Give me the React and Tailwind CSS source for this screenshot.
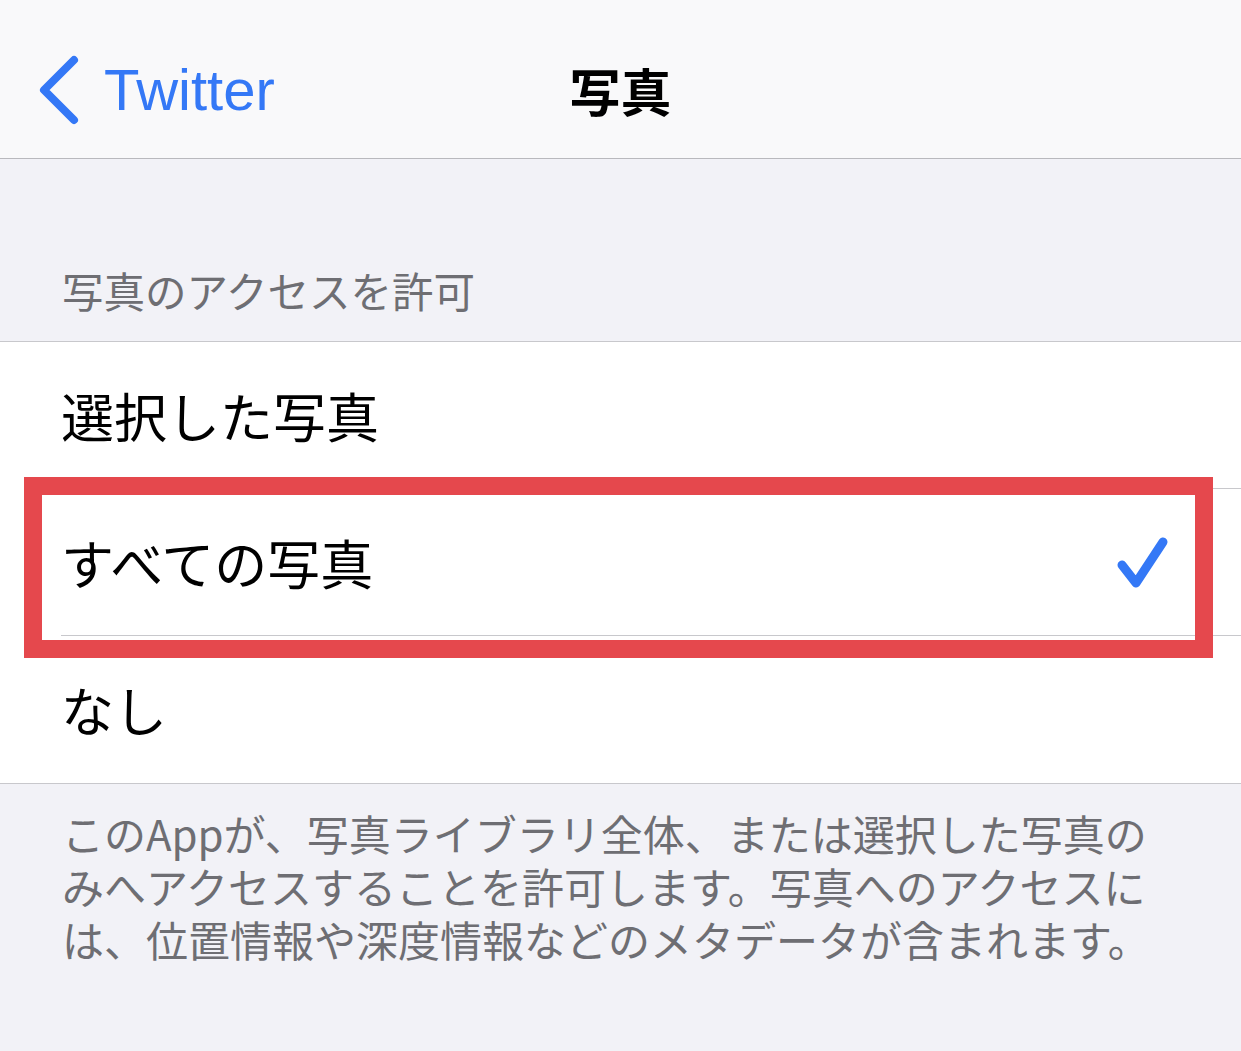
import React from 'react';

const jp = { fontFamily: '"Noto Sans CJK JP", "Noto Sans", sans-serif' };

function Row({ label, checked, last }) {
  return (
    <div className="h-[147px] pl-[61px] bg-white">
      <div className={`h-full flex items-center justify-between pr-[69px] ${last ? '' : 'border-b border-[#c8c8cc]'}`}>
        <span className="text-[53px] leading-none text-black" style={jp}>{label}</span>
        {checked && (
          <svg width="60" height="60" viewBox="0 0 60 60" fill="none">
            <path d="M10 33 L24 51 L51 10" stroke="#3478f6" strokeWidth="9" strokeLinecap="round" strokeLinejoin="round" />
          </svg>
        )}
      </div>
    </div>
  );
}

export default function App() {
  return (
    <div className="relative w-[1241px] h-[1051px] bg-[#f2f2f7] overflow-hidden" style={jp}>
      {/* ナビゲーションバー */}
      <header className="h-[159px] pt-[22px] bg-[#f9f9fa] border-b border-[#b9b9bd] grid grid-cols-[1fr_auto_1fr] items-center">
        <div className="flex items-center pl-[37px]">
          <svg width="44" height="70" viewBox="0 0 44 70" fill="none">
            <path d="M37 5 L7 35 L37 65" stroke="#3478f6" strokeWidth="8" strokeLinecap="round" strokeLinejoin="round" />
          </svg>
          <span className="ml-[23px] text-[58px] leading-none text-[#3478f6]" style={{ fontFamily: '"Liberation Sans", Arial, sans-serif' }}>
            Twitter
          </span>
        </div>
        <h1 className="text-[51px] font-bold leading-none text-black">写真</h1>
        <div />
      </header>

      {/* セクションヘッダー */}
      <div className="h-[183px] flex items-end pb-[30px] pl-[62px] border-b border-[#c8c8cc]">
        <span className="text-[41.5px] leading-none text-[#6e6e73]">写真のアクセスを許可</span>
      </div>

      {/* 選択肢 */}
      <div className="border-b border-[#c8c8cc]">
        <Row label="選択した写真" />
        <Row label="すべての写真" checked />
        <Row label="なし" last />
      </div>

      {/* フッター説明 */}
      <p className="pl-[62px] pt-[22px] text-[42px] leading-[53px] text-[#6e6e73] whitespace-nowrap">
        このAppが、写真ライブラリ全体、または選択した写真の<br />
        みへアクセスすることを許可します。写真へのアクセスに<br />
        は、位置情報や深度情報などのメタデータが含まれます。
      </p>

      {/* 注釈の赤枠 */}
      <div className="absolute left-[24px] top-[477px] w-[1189px] h-[181px] border-[18px] border-[#e5484d] pointer-events-none" />
    </div>
  );
}
